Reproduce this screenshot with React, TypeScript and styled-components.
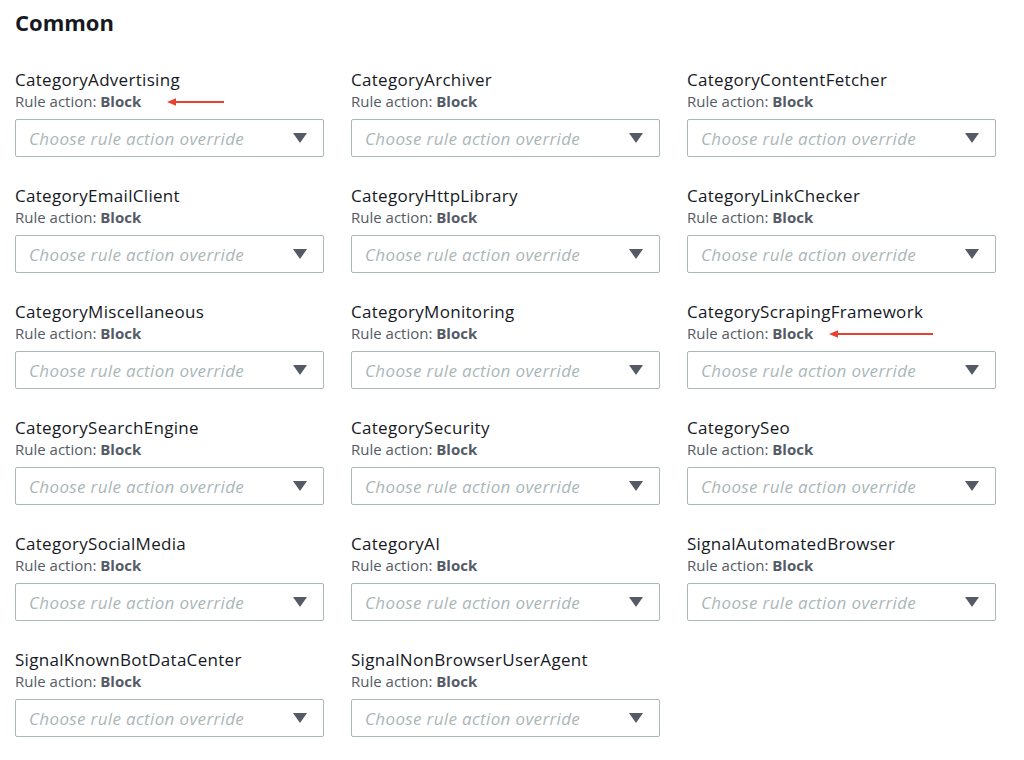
import React, { FC } from 'react';
import styled, { createGlobalStyle } from 'styled-components';

const GlobalStyle = createGlobalStyle`
  html, body {
    margin: 0;
    padding: 0;
    background: #ffffff;
  }
  body {
    font-family: "Open Sans", "Noto Sans", Arial, sans-serif;
    color: #16191f;
  }
`;

const Page = styled.div`
  width: 1024px;
  height: 760px;
  padding: 8px 15px 0;
  box-sizing: border-box;
  overflow: hidden;
`;

const Heading = styled.h2`
  margin: 0 0 33px;
  font-size: 22px;
  line-height: 28px;
  font-weight: 700;
  color: #16191f;
`;

const Grid = styled.div`
  display: grid;
  grid-template-columns: repeat(3, 309px);
  column-gap: 27px;
  row-gap: 28px;
`;

const Field = styled.div`
  position: relative;
  display: flex;
  flex-direction: column;
`;

const Title = styled.div`
  font-size: 17px;
  line-height: 22px;
  letter-spacing: 0.3px;
  color: #16191f;
`;

const Sub = styled.div`
  font-size: 15px;
  line-height: 20px;
  color: #545b64;

  b {
    font-weight: 700;
  }
`;

const Select = styled.div`
  margin-top: 8px;
  height: 38px;
  box-sizing: border-box;
  border: 1px solid #aab7b8;
  border-radius: 2px;
  display: flex;
  align-items: center;
  justify-content: space-between;
  padding: 0 16px 0 13px;
`;

const Placeholder = styled.span`
  font-size: 17px;
  letter-spacing: 0.35px;
  font-style: italic;
  color: #aab7b8;
`;

const Caret = styled.svg`
  width: 14px;
  height: 10px;
  fill: #545b64;
`;

const Arrow = styled.svg<{ $left: number; $width: number; $top: number }>`
  position: absolute;
  left: ${({ $left }) => $left}px;
  top: ${({ $top }) => $top}px;
  width: ${({ $width }) => $width}px;
  height: 10px;
  overflow: visible;
`;

interface Rule {
  name: string;
  arrow?: { left: number; width: number };
}

const rules: Rule[] = [
  { name: 'CategoryAdvertising', arrow: { left: 152, width: 57 } },
  { name: 'CategoryArchiver' },
  { name: 'CategoryContentFetcher' },
  { name: 'CategoryEmailClient' },
  { name: 'CategoryHttpLibrary' },
  { name: 'CategoryLinkChecker' },
  { name: 'CategoryMiscellaneous' },
  { name: 'CategoryMonitoring' },
  { name: 'CategoryScrapingFramework', arrow: { left: 142, width: 104 } },
  { name: 'CategorySearchEngine' },
  { name: 'CategorySecurity' },
  { name: 'CategorySeo' },
  { name: 'CategorySocialMedia' },
  { name: 'CategoryAI' },
  { name: 'SignalAutomatedBrowser' },
  { name: 'SignalKnownBotDataCenter' },
  { name: 'SignalNonBrowserUserAgent' },
];

const RuleField: FC<{ rule: Rule }> = ({ rule }) => (
  <Field>
    <Title>{rule.name}</Title>
    <Sub>
      Rule action: <b>Block</b>
    </Sub>
    <Select>
      <Placeholder>Choose rule action override</Placeholder>
      <Caret viewBox="0 0 14 10">
        <path d="M0 0 H14 L7 10 Z" />
      </Caret>
    </Select>
    {rule.arrow && (
      <Arrow
        $left={rule.arrow.left}
        $width={rule.arrow.width}
        $top={28}
        viewBox={`0 0 ${rule.arrow.width} 10`}
      >
        <line x1="6" y1="5" x2={rule.arrow.width} y2="5" stroke="#e8412e" strokeWidth="2" />
        <path d="M0 5 L9 1.2 L9 8.8 Z" fill="#e8412e" />
      </Arrow>
    )}
  </Field>
);

const App: FC = () => (
  <Page>
    <GlobalStyle />
    <Heading>Common</Heading>
    <Grid>
      {rules.map((rule) => (
        <RuleField key={rule.name} rule={rule} />
      ))}
    </Grid>
  </Page>
);

export default App;
